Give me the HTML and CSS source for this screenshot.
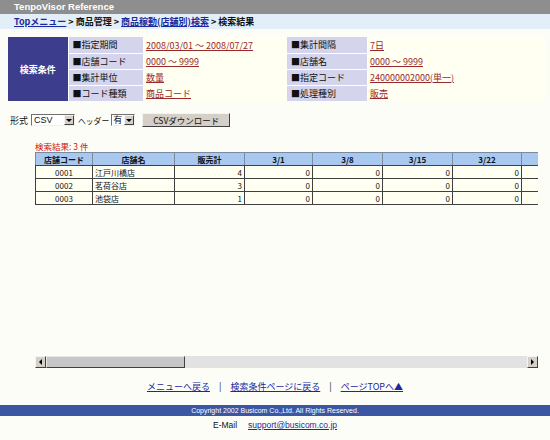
FILE: index.html
```html
<!DOCTYPE html>
<html lang="ja">
<head>
<meta charset="utf-8">
<title>TenpoVisor Reference</title>
<link rel="stylesheet" href="styles.css">
</head>
<body>
<div class="titlebar">TenpoVisor Reference</div>
<div class="crumbs"><a href="#">Topメニュー</a> &gt; 商品管理 &gt; <a href="#">商品稼動(店舗別)検索</a> &gt; 検索結果</div>
<main class="content">
  <table class="cond">
    <tr>
      <th class="cond-title" rowspan="4">検索条件</th>
      <td class="lbl">■指定期間</td>
      <td class="val"><a href="#">2008/03/01 ～ 2008/07/27</a></td>
      <td class="lbl">■集計間隔</td>
      <td class="val"><a href="#">7日</a></td>
    </tr>
    <tr>
      <td class="lbl">■店舗コード</td>
      <td class="val"><a href="#">0000 ～ 9999</a></td>
      <td class="lbl">■店舗名</td>
      <td class="val"><a href="#">0000 ～ 9999</a></td>
    </tr>
    <tr>
      <td class="lbl">■集計単位</td>
      <td class="val"><a href="#">数量</a></td>
      <td class="lbl">■指定コード</td>
      <td class="val"><a href="#">240000002000(単一)</a></td>
    </tr>
    <tr>
      <td class="lbl last">■コード種類</td>
      <td class="val"><a href="#">商品コード</a></td>
      <td class="lbl last">■処理種別</td>
      <td class="val"><a href="#">販売</a></td>
    </tr>
  </table>

  <div class="form-row">
    <span class="form-label">形式</span>
    <span class="sel sel-csv"><span class="sel-text">CSV</span><span class="sel-btn"><span class="tri-down"></span></span></span>
    <span class="form-label form-label-sm">ヘッダー</span>
    <span class="sel sel-hdr"><span class="sel-text">有</span><span class="sel-btn"><span class="tri-down"></span></span></span>
    <span class="btn">CSVダウンロード</span>
  </div>

  <div class="results">
    <div class="count">検索結果: 3 件</div>
    <div class="scrollbox">
      <div class="viewport">
        <table class="data">
          <colgroup>
            <col class="c-code"><col class="c-name"><col class="c-w70"><col class="c-w68"><col class="c-w70"><col class="c-w70"><col class="c-w69"><col class="c-part">
          </colgroup>
          <thead>
            <tr><th>店舗コード</th><th>店舗名</th><th>販売計</th><th>3/1</th><th>3/8</th><th>3/15</th><th>3/22</th><th class="part"></th></tr>
          </thead>
          <tbody>
            <tr><td class="ctr">0001</td><td>江戸川橋店</td><td class="num">4</td><td class="num">0</td><td class="num">0</td><td class="num">0</td><td class="num">0</td><td class="part"></td></tr>
            <tr><td class="ctr">0002</td><td>茗荷谷店</td><td class="num">3</td><td class="num">0</td><td class="num">0</td><td class="num">0</td><td class="num">0</td><td class="part"></td></tr>
            <tr><td class="ctr">0003</td><td>池袋店</td><td class="num">1</td><td class="num">0</td><td class="num">0</td><td class="num">0</td><td class="num">0</td><td class="part"></td></tr>
          </tbody>
        </table>
      </div>
      <div class="hscroll">
        <span class="sb-btn"><span class="tri-left"></span></span>
        <span class="sb-track"><span class="sb-thumb"></span></span>
        <span class="sb-btn"><span class="tri-right"></span></span>
      </div>
    </div>
  </div>

  <nav class="links">
    <a href="#">メニューへ戻る</a><span class="sep">|</span><a href="#">検索条件ページに戻る</a><span class="sep">|</span><a href="#">ページTOPへ▲</a>
  </nav>
</main>
<footer class="footer">
  <div class="copyright">Copyright 2002 Busicom Co.,Ltd. All Rights Reserved.</div>
  <div class="mail"><span>E-Mail</span><a href="#">support@busicom.co.jp</a></div>
</footer>
</body>
</html>
```

FILE: styles.css
```css
* { box-sizing: border-box; }
html, body { margin: 0; padding: 0; }
body {
  width: 550px;
  height: 440px;
  overflow: hidden;
  background: #fdfdf8;
  font-family: "Noto Sans CJK JP", "Liberation Sans", sans-serif;
  font-size: 9px;
  color: #111;
}

.titlebar {
  height: 14px;
  line-height: 14px;
  background: #8e8e8e;
  color: #fff;
  font-family: "Liberation Sans", sans-serif;
  font-weight: bold;
  font-size: 9.5px;
  padding-left: 14px;
}

.crumbs {
  height: 15px;
  line-height: 15px;
  background: #e2eef8;
  padding-left: 14px;
  font-size: 9px;
  font-weight: bold;
  color: #111;
  white-space: nowrap;
}
.crumbs a { color: #1a2a9c; }

.content { padding: 8px 5px 0 8px; }

.cond {
  width: 537px;
  border-collapse: collapse;
  table-layout: fixed;
}
.cond td, .cond th {
  height: 16px;
  padding: 0 0 0 4px;
  font-size: 9px;
  white-space: nowrap;
  font-weight: normal;
}
.cond-title {
  width: 60px;
  background: #3d3d8e;
  color: #fff;
  font-weight: bold !important;
  text-align: center;
  border-right: 1px solid #fff;
  padding: 0 !important;
}
.lbl {
  background: #d4d4ec;
  border-bottom: 1px solid #fff;
  color: #111;
}
.lbl.last { border-bottom: none; }
.cond tr td.lbl:nth-of-type(1) { width: 75px; }
.cond tr td.val:nth-of-type(2) { width: 144px; }
.cond tr td.lbl:nth-of-type(3) { width: 80px; }
.val {
  background: #fffff2;
  padding-left: 3px !important;
}
.val a { color: #9a2a2a; }

.form-row {
  margin-top: 12px;
  height: 14px;
  display: flex;
  align-items: center;
  padding-left: 2px;
  font-size: 9px;
}
.form-label { margin-right: 3px; }
.form-label-sm { font-size: 7.8px; margin-right: 2px; }
.sel {
  display: inline-flex;
  align-items: stretch;
  height: 12px;
  border: 1px solid;
  border-color: #707070 #f0f0f0 #f0f0f0 #707070;
  background: #fff;
  margin-right: 3px;
}
.sel-csv { width: 44px; }
.sel-hdr { width: 24px; margin-right: 7px; }
.sel-text {
  flex: 1;
  font-family: "Liberation Sans", sans-serif;
  font-size: 9px;
  line-height: 10px;
  padding-left: 2px;
}
.sel-hdr .sel-text { font-family: "Noto Sans CJK JP", sans-serif; padding-left: 1px; }
.sel-btn {
  width: 10px;
  background: #d4d0c8;
  border: 1px solid;
  border-color: #f4f4f4 #404040 #404040 #f4f4f4;
  display: flex;
  align-items: center;
  justify-content: center;
}
.tri-down {
  width: 0; height: 0;
  border-left: 3px solid transparent;
  border-right: 3px solid transparent;
  border-top: 3px solid #000;
}
.btn {
  width: 88px;
  height: 14px;
  background: #d4d0c8;
  border: 1px solid;
  border-color: #f4f4f4 #404040 #404040 #f4f4f4;
  font-size: 8.5px;
  line-height: 12px;
  text-align: center;
  color: #111;
}

.results { margin: 14px 0 0 27px; }
.count {
  color: #cc1111;
  font-size: 8.5px;
  height: 11px;
  line-height: 10px;
}
.scrollbox { width: 503px; }
.viewport {
  height: 204px;
  overflow: hidden;
}
.data {
  border-collapse: collapse;
  table-layout: fixed;
  width: 505px;
}
.c-code { width: 57px; }
.c-name { width: 82px; }
.c-w70 { width: 70px; }
.c-w68 { width: 68px; }
.c-w69 { width: 69px; }
.c-part { width: 19px; }
.data th {
  height: 13px;
  padding: 0;
  background: #a9c8f0;
  color: #111;
  font-size: 8px;
  font-weight: bold;
  line-height: 11px;
  border: 1px solid #7c8aa0;
  border-bottom-color: #404040;
  text-align: center;
}
.data td {
  height: 13px;
  padding: 0 2px;
  background: #fffff2;
  font-size: 8px;
  line-height: 11px;
  border: 1px solid #404040;
  white-space: nowrap;
}
.data .part { border-right: none; }
.data td.ctr { text-align: center; }
.data td.num { text-align: right; }

.hscroll {
  height: 12px;
  display: flex;
}
.sb-btn {
  width: 11px;
  height: 12px;
  background: #d4d0c8;
  border: 1px solid;
  border-color: #f4f4f4 #404040 #404040 #f4f4f4;
  display: flex;
  align-items: center;
  justify-content: center;
}
.tri-left {
  width: 0; height: 0;
  border-top: 3px solid transparent;
  border-bottom: 3px solid transparent;
  border-right: 3px solid #000;
}
.tri-right {
  width: 0; height: 0;
  border-top: 3px solid transparent;
  border-bottom: 3px solid transparent;
  border-left: 3px solid #000;
}
.sb-track {
  flex: 1;
  background: #e2e2e2;
  display: flex;
}
.sb-thumb {
  width: 139px;
  background: #c6c6c6;
  border: 1px solid;
  border-color: #e8e8e8 #404040 #404040 #e8e8e8;
}

.links {
  margin-top: 13px;
  text-align: center;
  font-size: 9px;
  height: 12px;
  line-height: 12px;
  padding-right: 3px;
}
.links a { color: #1a2a9c; }
.links .sep { margin: 0 9px; color: #222; }

.footer { margin-top: 12px; }
.copyright {
  height: 11px;
  line-height: 11px;
  background: #3b56a3;
  color: #fff;
  text-align: center;
  font-family: "Liberation Sans", sans-serif;
  font-size: 7px;
}
.mail {
  margin-top: 3px;
  text-align: center;
  font-family: "Liberation Sans", sans-serif;
  font-size: 8.5px;
  line-height: 12px;
}
.mail span { margin-right: 11px; }
.mail a { color: #1a2a9c; }
```
